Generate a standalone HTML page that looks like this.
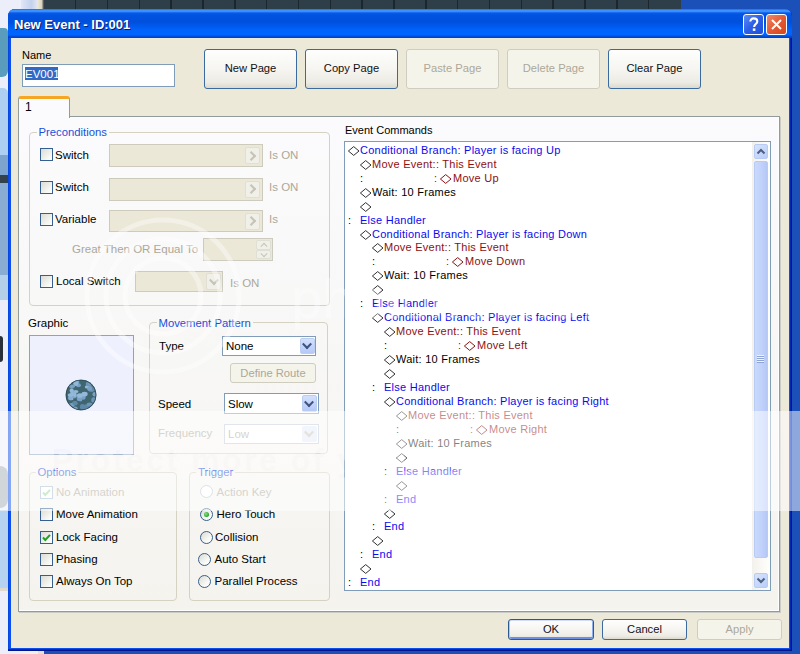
<!DOCTYPE html>
<html><head><meta charset="utf-8">
<style>
*{margin:0;padding:0;box-sizing:border-box}
html,body{width:800px;height:654px;overflow:hidden}
body{position:relative;background:#1a50b8;font-family:"Liberation Sans",sans-serif;font-size:12px;color:#000}
.a{position:absolute}
.t{position:absolute;white-space:nowrap;line-height:12px}
/* background */
#tiles{left:44px;top:0;width:637px;height:9px;background:#2e3f4a}
#win{left:8px;top:9px;width:784px;height:642px;background:#0a4ff0;border-radius:7px 7px 0 0;box-shadow:inset -1px -1px 0 #001585,inset -2px -2px 0 #0028b8,inset 1px 0 0 #0846e0}
#title{left:8px;top:9px;width:784px;height:29px;border-radius:7px 7px 0 0;
background:linear-gradient(#0b5ef2 0,#3d95ff 1px,#3a8cff 2.5px,#0a5ae8 4px,#0053e0 6px,#0050dc 13px,#005cf0 18px,#0063fc 21px,#0064ff 26px,#0050e0 27px,#003ec0 29px)}
#client{left:11px;top:38px;width:778px;height:610px;background:#ece9d8}
.btn{position:absolute;border:1px solid #3a6a9e;border-radius:3px;background:linear-gradient(#fefefd,#f6f5f1 50%,#ecebe4 85%,#dcd9cd);text-align:center;font-size:11.2px;color:#111}
.btn.dis{border-color:#cfcdbf;background:#f5f4eb;color:#aca899}
.cb{position:absolute;width:13px;height:13px;border:1px solid #355f90;background:linear-gradient(135deg,#dcdbd4,#f6f6f2 70%,#fff)}
.cb.dis{border-color:#a9bdd3;background:#fff}
.rb{position:absolute;width:13px;height:13px;border:1px solid #355f90;border-radius:50%;background:linear-gradient(135deg,#dcdbd4,#fafaf8 70%,#fff)}
.rb.dis{border-color:#b3c4d8;background:#fff}
.gb{position:absolute;border:1px solid #d5d2c2;border-radius:4px}
.gl{position:absolute;color:#1a4fdc;white-space:nowrap;line-height:12px;padding:0 2px}
.grey{color:#aca899}
.combo-d{position:absolute;border:1px solid #cdcbbd;background:#ebe8d7}
.combo{position:absolute;border:1px solid #7f9db9;background:#fff}
.dd{position:absolute;border-radius:2px;background:linear-gradient(#d3e0fd,#b5c9f7);border:1px solid #bccdf4}
.dd.dis{background:#f0efe8;border-color:#e0dfd6}
#list div{height:13.9px;line-height:13.9px;white-space:nowrap}
.b{color:#0a0af0}.r{color:#8e1010}.k{color:#000}
.ln{position:absolute;left:0;top:0;height:14px}
.s{position:absolute;top:0;white-space:nowrap;line-height:14px;font-size:11px;letter-spacing:0.25px}
.dm{position:relative;top:2px}
.dm path{fill:none;stroke:#303030;stroke-width:1}
.dr path{stroke:#8e1010}
.dd::after{content:"";position:absolute;left:50%;top:50%;width:5px;height:5px;border-right:2px solid #3d5380;border-bottom:2px solid #3d5380;transform:translate(-50%,-75%) rotate(45deg)}
.dd.dis::after{border-color:#c6c4b6}
.dd.rt::after{transform:translate(-75%,-50%) rotate(-45deg)}
.dd.up::after{transform:translate(-50%,-25%) rotate(-135deg);width:4px;height:4px;border-width:1.5px}
.dd.dn::after{width:4px;height:4px;border-width:1.5px}
</style></head><body>
<!-- background strips -->
<div class="a" style="left:0;top:0;width:21px;height:654px;background:#eceff9"></div>
<div class="a" style="left:21px;top:0;width:17px;height:9px;background:linear-gradient(90deg,#dfe6f6,#c4d2ee 60%,#e6e9ef)"></div>
<div class="a" style="left:38px;top:0;width:6px;height:9px;background:linear-gradient(90deg,#ebe7d3,#d8d4c0 60%,#3a3d3f)"></div>
<div class="a" id="tiles"></div>
<div class="a" style="left:74.8px;top:0;width:1.6px;height:9px;background:#1c272d"></div><div class="a" style="left:106.6px;top:0;width:1.6px;height:9px;background:#1c272d"></div><div class="a" style="left:138.5px;top:0;width:1.6px;height:9px;background:#1c272d"></div><div class="a" style="left:170.3px;top:0;width:1.6px;height:9px;background:#1c272d"></div><div class="a" style="left:202.2px;top:0;width:1.6px;height:9px;background:#1c272d"></div><div class="a" style="left:234.0px;top:0;width:1.6px;height:9px;background:#1c272d"></div><div class="a" style="left:265.8px;top:0;width:1.6px;height:9px;background:#1c272d"></div><div class="a" style="left:297.7px;top:0;width:1.6px;height:9px;background:#1c272d"></div><div class="a" style="left:329.5px;top:0;width:1.6px;height:9px;background:#1c272d"></div><div class="a" style="left:361.4px;top:0;width:1.6px;height:9px;background:#1c272d"></div><div class="a" style="left:393.2px;top:0;width:1.6px;height:9px;background:#1c272d"></div><div class="a" style="left:425.0px;top:0;width:1.6px;height:9px;background:#1c272d"></div><div class="a" style="left:456.9px;top:0;width:1.6px;height:9px;background:#1c272d"></div><div class="a" style="left:488.7px;top:0;width:1.6px;height:9px;background:#1c272d"></div><div class="a" style="left:520.6px;top:0;width:1.6px;height:9px;background:#1c272d"></div><div class="a" style="left:552.4px;top:0;width:1.6px;height:9px;background:#1c272d"></div><div class="a" style="left:584.2px;top:0;width:1.6px;height:9px;background:#1c272d"></div><div class="a" style="left:616.1px;top:0;width:1.6px;height:9px;background:#1c272d"></div><div class="a" style="left:647.9px;top:0;width:1.6px;height:9px;background:#1c272d"></div>
<div class="a" style="left:0;top:28px;width:8px;height:49px;background:#5a9cbc;border-radius:0 4px 6px 0"></div>
<div class="a" style="left:0;top:88px;width:8px;height:67px;background:#add0f2;border-radius:0 5px 0 0"></div>
<div class="a" style="left:0;top:155px;width:8px;height:20px;background:#7ca4cc"></div>
<div class="a" style="left:0;top:175px;width:8px;height:8px;background:#34424c"></div>
<div class="a" style="left:0;top:183px;width:8px;height:92px;background:#88acd2"></div>
<div class="a" style="left:0;top:275px;width:8px;height:25px;background:#b4cfe8"></div>
<div class="a" style="left:0;top:336px;width:3px;height:26px;background:#2a3038;border-radius:0 3px 3px 0"></div>
<div class="a" style="left:0;top:466px;width:8px;height:42px;background:#a3acb7;border-radius:0 8px 8px 0"></div>
<div class="a" style="left:0;top:510px;width:8px;height:78px;background:#b5d3f0"></div>
<div class="a" style="left:0;top:588px;width:8px;height:3px;background:#dedad0"></div>
<div class="a" style="left:21px;top:651px;width:17px;height:3px;background:#f2f0ea"></div>
<div class="a" style="left:38px;top:651px;width:6px;height:3px;background:#e6e2d0"></div>

<div class="a" id="win"></div>
<div class="a" id="title"></div>
<div class="t" style="left:14px;top:18px;color:#fff;font-weight:bold;font-size:13px;line-height:14px;text-shadow:1px 1px 0 #0a1a70">New Event - ID:001</div>
<!-- help / close -->
<div class="a" style="left:743px;top:14px;width:21px;height:21px;border:1px solid #fff;border-radius:3px;background:linear-gradient(135deg,#5c8cf6,#2c5ee6 50%,#2050d8)"></div>
<svg class="a" style="left:743px;top:14px" width="21" height="21"><path d="M7.3 7.6C7.3 5.4 8.8 4.4 10.7 4.4C12.8 4.4 14.3 5.6 14.3 7.4C14.3 9.8 11.1 10.1 11.1 12.9" stroke="#fff" stroke-width="2.1" fill="none"/><rect x="9.8" y="14.4" width="2.6" height="2.5" fill="#fff"/></svg>
<div class="a" style="left:766px;top:14px;width:21px;height:21px;border:1px solid #fff;border-radius:3px;background:linear-gradient(135deg,#ef8a6a,#e35a34 50%,#d84618)"></div>
<svg class="a" style="left:766px;top:14px" width="21" height="21"><path d="M6 6L15 15M15 6L6 15" stroke="#fff" stroke-width="2"/></svg>

<div class="a" id="client"></div>
<div class="t" style="left:22px;top:49px;font-size:11px">Name</div>
<div class="a" style="left:22px;top:64px;width:153px;height:23px;border:1px solid #7f9db9;background:#fff"></div>
<div class="a" style="left:25px;top:67px;width:33px;height:13px;background:#316ac5"></div>
<div class="t" style="left:25px;top:68px;color:#fff;font-size:11.5px">EV001</div>

<div class="btn" style="left:204px;top:49px;width:93px;height:40px;line-height:36px">New Page</div>
<div class="btn" style="left:305px;top:49px;width:93px;height:40px;line-height:36px">Copy Page</div>
<div class="btn dis" style="left:406px;top:49px;width:93px;height:40px;line-height:36px">Paste Page</div>
<div class="btn dis" style="left:507px;top:49px;width:93px;height:40px;line-height:36px">Delete Page</div>
<div class="btn" style="left:608px;top:49px;width:93px;height:40px;line-height:36px">Clear Page</div>

<!-- tab panel -->
<div class="a" style="left:18px;top:116px;width:762px;height:496px;border:1px solid #919b9c;box-shadow:inset -1px -1px 0 #fff,1px 1px 0 #c9cbc4;background:linear-gradient(#fbfbfd,#f4f3ee)"></div>
<div class="a" style="left:18px;top:96px;width:52px;height:22px;border:1px solid #919b9c;border-bottom:none;border-top:3px solid #f5a623;border-radius:3px 3px 0 0;background:#fbfbfd"></div>
<div class="t" style="left:25px;top:101px">1</div>

<!-- Preconditions -->
<div class="gb" style="left:29px;top:132px;width:301px;height:174px"></div>
<div class="gl" style="left:36.5px;top:125.5px;background:#fbfbfc;font-size:11.3px">Preconditions</div>
<div class="cb" style="left:40px;top:148px"></div>
<div class="t" style="left:55px;top:148.5px;font-size:11.5px">Switch</div>
<div class="combo-d" style="left:109px;top:144px;width:154px;height:23px"></div>
<div class="dd dis rt" style="left:245px;top:147px;width:15px;height:17px"></div>
<div class="t grey" style="left:269px;top:148.5px;font-size:11.5px">Is ON</div>
<div class="cb" style="left:40px;top:181px"></div>
<div class="t" style="left:55px;top:181px;font-size:11.5px">Switch</div>
<div class="combo-d" style="left:109px;top:177.5px;width:154px;height:23px"></div>
<div class="dd dis rt" style="left:245px;top:180.5px;width:15px;height:17px"></div>
<div class="t grey" style="left:269px;top:181px;font-size:11.5px">Is ON</div>
<div class="cb" style="left:40px;top:213px"></div>
<div class="t" style="left:55px;top:213px;font-size:11.5px">Variable</div>
<div class="combo-d" style="left:109px;top:210px;width:154px;height:22px"></div>
<div class="dd dis rt" style="left:245px;top:212.5px;width:15px;height:17px"></div>
<div class="t grey" style="left:269px;top:213px;font-size:11.5px">Is</div>
<div class="t grey" style="left:72px;top:243px;font-size:11.5px">Great Then OR Equal To</div>
<div class="combo-d" style="left:203px;top:238px;width:70px;height:23px"></div>
<div class="dd dis up" style="left:256px;top:240px;width:15px;height:10px"></div>
<div class="dd dis dn" style="left:256px;top:250px;width:15px;height:9px"></div>
<div class="cb" style="left:40px;top:275px"></div>
<div class="t" style="left:56px;top:275px;font-size:11.5px">Local Switch</div>
<div class="combo-d" style="left:135px;top:271px;width:88px;height:21px"></div>
<div class="dd dis" style="left:206px;top:273px;width:15px;height:17px"></div>
<div class="t grey" style="left:230px;top:277px;font-size:11.5px">Is ON</div>

<!-- Graphic -->
<div class="t" style="left:28px;top:316.5px;font-size:11.5px">Graphic</div>
<div class="a" style="left:29px;top:335px;width:105px;height:120px;border:1px solid #8da2c0;background:#eef1fd"></div>
<svg class="a" style="left:65px;top:379px" width="32" height="32"><defs><clipPath id="rk"><circle cx="16" cy="16" r="15.3"/></clipPath></defs><g clip-path="url(#rk)"><rect width="32" height="32" fill="#3f6670"/><ellipse cx="8.7" cy="17.2" rx="3.1" ry="2.1" fill="#7aa2c6"/><ellipse cx="18.3" cy="19.0" rx="2.2" ry="1.8" fill="#7aa2c6"/><ellipse cx="29.9" cy="15.2" rx="2.5" ry="2.3" fill="#7aa0c2"/><ellipse cx="6.2" cy="19.8" rx="2.3" ry="1.5" fill="#93b8da"/><ellipse cx="23.8" cy="6.5" rx="1.9" ry="2.5" fill="#7aa0c2"/><ellipse cx="25.1" cy="9.5" rx="2.8" ry="2.6" fill="#7aa0c2"/><ellipse cx="22.0" cy="27.8" rx="2.8" ry="2.2" fill="#5f88a8"/><ellipse cx="12.2" cy="3.0" rx="2.1" ry="2.8" fill="#7aa2c6"/><ellipse cx="14.2" cy="19.5" rx="2.4" ry="2.6" fill="#7aa2c6"/><ellipse cx="18.1" cy="17.0" rx="2.6" ry="2.7" fill="#7aa2c6"/><ellipse cx="21.1" cy="28.0" rx="3.2" ry="2.4" fill="#5f88a8"/><ellipse cx="6.6" cy="26.1" rx="3.1" ry="2.2" fill="#7aa0c2"/><ellipse cx="22.0" cy="7.9" rx="2.2" ry="1.7" fill="#93b8da"/><ellipse cx="15.5" cy="19.9" rx="1.9" ry="2.5" fill="#7aa2c6"/><ellipse cx="13.5" cy="6.2" rx="2.4" ry="2.0" fill="#7aa2c6"/><ellipse cx="5.3" cy="18.9" rx="2.3" ry="2.3" fill="#86acd0"/><ellipse cx="17.4" cy="27.8" rx="2.5" ry="2.8" fill="#5f88a8"/><ellipse cx="10.7" cy="4.2" rx="2.5" ry="2.7" fill="#93b8da"/><ellipse cx="29.2" cy="10.2" rx="2.0" ry="1.6" fill="#5f88a8"/><ellipse cx="26.3" cy="10.8" rx="3.1" ry="2.0" fill="#6c94b6"/><ellipse cx="14.9" cy="16.6" rx="3.0" ry="2.4" fill="#93b8da"/><ellipse cx="24.7" cy="9.6" rx="2.8" ry="1.8" fill="#7aa0c2"/><ellipse cx="10.4" cy="29.4" rx="2.2" ry="1.9" fill="#7aa0c2"/><ellipse cx="10.8" cy="12.5" rx="2.7" ry="1.6" fill="#93b8da"/><ellipse cx="19.6" cy="15.1" rx="3.1" ry="2.3" fill="#93b8da"/><ellipse cx="9.8" cy="15.7" rx="1.9" ry="2.4" fill="#93b8da"/><ellipse cx="29.0" cy="9.0" rx="2.2" ry="2.3" fill="#5f88a8"/><ellipse cx="7.0" cy="7.2" rx="3.0" ry="1.8" fill="#7aa2c6"/><ellipse cx="24.0" cy="4.9" rx="3.2" ry="2.4" fill="#6c94b6"/><ellipse cx="5.7" cy="16.0" rx="2.9" ry="1.8" fill="#93b8da"/><ellipse cx="7.2" cy="14.2" rx="1.9" ry="2.3" fill="#93b8da"/><ellipse cx="28.6" cy="20.9" rx="2.4" ry="2.6" fill="#6c94b6"/><ellipse cx="6.7" cy="11.4" rx="2.1" ry="2.2" fill="#93b8da"/><ellipse cx="9.6" cy="24.0" rx="2.5" ry="1.7" fill="#6c94b6"/><ellipse cx="24.6" cy="25.5" rx="3.0" ry="1.9" fill="#6c94b6"/><ellipse cx="25.2" cy="4.4" rx="2.3" ry="1.7" fill="#7aa0c2"/><ellipse cx="10.2" cy="24.2" rx="2.5" ry="2.3" fill="#5f88a8"/><circle cx="16" cy="16" r="15.3" fill="none" stroke="#2c4a54" stroke-width="1.6"/></g></svg>

<!-- Movement Pattern -->
<div class="gb" style="left:149px;top:322px;width:179px;height:132px"></div>
<div class="gl" style="left:156.5px;top:316.5px;background:#f8f8f6;font-size:11.3px">Movement Pattern</div>
<div class="t" style="left:159px;top:339.5px;font-size:11.5px">Type</div>
<div class="combo" style="left:222px;top:336px;width:94px;height:20px"></div>
<div class="dd" style="left:299.5px;top:338px;width:15px;height:16px"></div>
<div class="t" style="left:226px;top:340px;font-size:11.5px">None</div>
<div class="btn dis" style="left:230px;top:363px;width:86px;height:20px;line-height:18px">Define Route</div>
<div class="t" style="left:158px;top:397.5px;font-size:11.5px">Speed</div>
<div class="combo" style="left:224px;top:393px;width:95px;height:21px"></div>
<div class="dd" style="left:301.5px;top:395px;width:15px;height:17px"></div>
<div class="t" style="left:228px;top:398px;font-size:11.5px">Slow</div>
<div class="t grey" style="left:158px;top:427px;font-size:11.5px">Frequency</div>
<div class="combo" style="left:224px;top:423.5px;width:95px;height:20px;border-color:#c3cdd9"></div>
<div class="dd dis" style="left:301.5px;top:425.5px;width:15px;height:16px;background:#e4eaf7;border-color:#e4eaf7"></div>
<div class="t grey" style="left:228px;top:428px;font-size:11.5px">Low</div>

<!-- Options -->
<div class="gb" style="left:29px;top:471.5px;width:148px;height:129px"></div>
<div class="gl" style="left:35.5px;top:465.5px;background:#f6f5f1;font-size:11.3px">Options</div>
<div class="cb dis" style="left:40px;top:485.5px"></div>
<div class="t grey" style="left:56px;top:485.5px;font-size:11.5px">No Animation</div>
<div class="cb" style="left:40px;top:508px"></div>
<div class="t" style="left:56px;top:508px;font-size:11.5px">Move Animation</div>
<div class="cb" style="left:40px;top:530.5px"></div>
<div class="t" style="left:56px;top:530.5px;font-size:11.5px">Lock Facing</div>
<div class="cb" style="left:40px;top:553px"></div>
<div class="t" style="left:56px;top:553px;font-size:11.5px">Phasing</div>
<div class="cb" style="left:40px;top:575px"></div>
<div class="t" style="left:56px;top:575px;font-size:11.5px">Always On Top</div>
<svg class="a" style="left:40px;top:485.5px" width="13" height="13"><path d="M3 6.5L5.3 9L10 3.8" stroke="#9fd59f" stroke-width="2" fill="none"/></svg>
<svg class="a" style="left:40px;top:530.5px" width="13" height="13"><path d="M3 6.5L5.3 9L10 3.8" stroke="#21a121" stroke-width="2" fill="none"/></svg>

<!-- Trigger -->
<div class="gb" style="left:189px;top:471.5px;width:141px;height:129px"></div>
<div class="gl" style="left:196px;top:465.5px;background:#f6f5f1;font-size:11.3px">Trigger</div>
<div class="rb dis" style="left:199.5px;top:485px"></div>
<div class="t grey" style="left:216.5px;top:485.5px;font-size:11.5px">Action Key</div>
<div class="rb" style="left:199.5px;top:507.5px"></div>
<div class="a" style="left:203.7px;top:511.7px;width:5px;height:5px;border-radius:50%;background:radial-gradient(circle at 40% 40%,#8fe08f,#24a524 70%)"></div>
<div class="t" style="left:216.5px;top:508px;font-size:11.5px">Hero Touch</div>
<div class="rb" style="left:199.5px;top:530.5px"></div>
<div class="t" style="left:215px;top:530.5px;font-size:11.5px">Collision</div>
<div class="rb" style="left:198px;top:553px"></div>
<div class="t" style="left:214.5px;top:553px;font-size:11.5px">Auto Start</div>
<div class="rb" style="left:198px;top:575px"></div>
<div class="t" style="left:214.5px;top:575px;font-size:11.5px">Parallel Process</div>

<!-- Event commands -->
<div class="t" style="left:345px;top:124px;font-size:11px">Event Commands</div>
<div class="a" style="left:344px;top:141px;width:427px;height:450px;border:1px solid #7f9db9;background:#fff"></div>
<div class="a" style="left:752px;top:142px;width:17px;height:448px;background:linear-gradient(90deg,#f3f1ec,#fefefb)"></div>
<div class="a" style="left:753.5px;top:144px;width:14px;height:15px;border-radius:2px;border:1px solid #b7cbf5;background:linear-gradient(135deg,#d8e4fd,#b8cdf8)"></div>
<svg class="a" style="left:753.5px;top:144px" width="14" height="15"><path d="M3.5 9.5L7 6L10.5 9.5" stroke="#4d6185" stroke-width="2" fill="none"/></svg>
<div class="a" style="left:754px;top:161px;width:13.5px;height:397px;border-radius:2px;border:1px solid #b7cbf5;background:linear-gradient(90deg,#cad9fb,#c1d3fb 50%,#b5c8f5)"></div>
<div class="a" style="left:757px;top:355px;width:7px;height:8px;background:repeating-linear-gradient(#eef3fe 0,#eef3fe 1px,#8ea5d4 1px,#8ea5d4 2px)"></div>
<div class="a" style="left:753.5px;top:573px;width:14px;height:15px;border-radius:2px;border:1px solid #b7cbf5;background:linear-gradient(135deg,#d8e4fd,#b8cdf8)"></div>
<svg class="a" style="left:753.5px;top:573px" width="14" height="15"><path d="M3.5 5.5L7 9L10.5 5.5" stroke="#4d6185" stroke-width="2" fill="none"/></svg>
<div id="list">
<div class="ln" style="top:142.80px"><span class="s" style="left:348px"><svg class="dm" width="12" height="10"><path d="M0.4 5L5.7 0.6L11 5L5.7 9.4Z"/></svg></span><span class="s b" style="left:360px">Conditional Branch: Player is facing Up</span></div>
<div class="ln" style="top:156.75px"><span class="s" style="left:360px"><svg class="dm" width="12" height="10"><path d="M0.4 5L5.7 0.6L11 5L5.7 9.4Z"/></svg></span><span class="s r" style="left:372px">Move Event:: This Event</span></div>
<div class="ln" style="top:170.70px"><span class="s k" style="left:360px">:</span><span class="s r" style="left:434px">:</span><span class="s" style="left:440px"><svg class="dm dr" width="12" height="10"><path d="M0.4 5L5.7 0.6L11 5L5.7 9.4Z"/></svg></span><span class="s r" style="left:453px">Move Up</span></div>
<div class="ln" style="top:184.65px"><span class="s" style="left:360px"><svg class="dm" width="12" height="10"><path d="M0.4 5L5.7 0.6L11 5L5.7 9.4Z"/></svg></span><span class="s k" style="left:372px">Wait: 10 Frames</span></div>
<div class="ln" style="top:198.60px"><span class="s" style="left:360px"><svg class="dm" width="12" height="10"><path d="M0.4 5L5.7 0.6L11 5L5.7 9.4Z"/></svg></span></div>
<div class="ln" style="top:212.55px"><span class="s k" style="left:348px">:</span><span class="s b" style="left:360px">Else Handler</span></div>
<div class="ln" style="top:226.50px"><span class="s" style="left:360px"><svg class="dm" width="12" height="10"><path d="M0.4 5L5.7 0.6L11 5L5.7 9.4Z"/></svg></span><span class="s b" style="left:372px">Conditional Branch: Player is facing Down</span></div>
<div class="ln" style="top:240.45px"><span class="s" style="left:372px"><svg class="dm" width="12" height="10"><path d="M0.4 5L5.7 0.6L11 5L5.7 9.4Z"/></svg></span><span class="s r" style="left:384px">Move Event:: This Event</span></div>
<div class="ln" style="top:254.40px"><span class="s k" style="left:372px">:</span><span class="s r" style="left:446px">:</span><span class="s" style="left:452px"><svg class="dm dr" width="12" height="10"><path d="M0.4 5L5.7 0.6L11 5L5.7 9.4Z"/></svg></span><span class="s r" style="left:465px">Move Down</span></div>
<div class="ln" style="top:268.35px"><span class="s" style="left:372px"><svg class="dm" width="12" height="10"><path d="M0.4 5L5.7 0.6L11 5L5.7 9.4Z"/></svg></span><span class="s k" style="left:384px">Wait: 10 Frames</span></div>
<div class="ln" style="top:282.30px"><span class="s" style="left:372px"><svg class="dm" width="12" height="10"><path d="M0.4 5L5.7 0.6L11 5L5.7 9.4Z"/></svg></span></div>
<div class="ln" style="top:296.25px"><span class="s k" style="left:360px">:</span><span class="s b" style="left:372px">Else Handler</span></div>
<div class="ln" style="top:310.20px"><span class="s" style="left:372px"><svg class="dm" width="12" height="10"><path d="M0.4 5L5.7 0.6L11 5L5.7 9.4Z"/></svg></span><span class="s b" style="left:384px">Conditional Branch: Player is facing Left</span></div>
<div class="ln" style="top:324.15px"><span class="s" style="left:384px"><svg class="dm" width="12" height="10"><path d="M0.4 5L5.7 0.6L11 5L5.7 9.4Z"/></svg></span><span class="s r" style="left:396px">Move Event:: This Event</span></div>
<div class="ln" style="top:338.10px"><span class="s k" style="left:384px">:</span><span class="s r" style="left:458px">:</span><span class="s" style="left:464px"><svg class="dm dr" width="12" height="10"><path d="M0.4 5L5.7 0.6L11 5L5.7 9.4Z"/></svg></span><span class="s r" style="left:477px">Move Left</span></div>
<div class="ln" style="top:352.05px"><span class="s" style="left:384px"><svg class="dm" width="12" height="10"><path d="M0.4 5L5.7 0.6L11 5L5.7 9.4Z"/></svg></span><span class="s k" style="left:396px">Wait: 10 Frames</span></div>
<div class="ln" style="top:366.00px"><span class="s" style="left:384px"><svg class="dm" width="12" height="10"><path d="M0.4 5L5.7 0.6L11 5L5.7 9.4Z"/></svg></span></div>
<div class="ln" style="top:379.95px"><span class="s k" style="left:372px">:</span><span class="s b" style="left:384px">Else Handler</span></div>
<div class="ln" style="top:393.90px"><span class="s" style="left:384px"><svg class="dm" width="12" height="10"><path d="M0.4 5L5.7 0.6L11 5L5.7 9.4Z"/></svg></span><span class="s b" style="left:396px">Conditional Branch: Player is facing Right</span></div>
<div class="ln" style="top:407.85px"><span class="s" style="left:396px"><svg class="dm" width="12" height="10"><path d="M0.4 5L5.7 0.6L11 5L5.7 9.4Z"/></svg></span><span class="s r" style="left:408px">Move Event:: This Event</span></div>
<div class="ln" style="top:421.80px"><span class="s k" style="left:396px">:</span><span class="s r" style="left:470px">:</span><span class="s" style="left:476px"><svg class="dm dr" width="12" height="10"><path d="M0.4 5L5.7 0.6L11 5L5.7 9.4Z"/></svg></span><span class="s r" style="left:489px">Move Right</span></div>
<div class="ln" style="top:435.75px"><span class="s" style="left:396px"><svg class="dm" width="12" height="10"><path d="M0.4 5L5.7 0.6L11 5L5.7 9.4Z"/></svg></span><span class="s k" style="left:408px">Wait: 10 Frames</span></div>
<div class="ln" style="top:449.70px"><span class="s" style="left:396px"><svg class="dm" width="12" height="10"><path d="M0.4 5L5.7 0.6L11 5L5.7 9.4Z"/></svg></span></div>
<div class="ln" style="top:463.65px"><span class="s k" style="left:384px">:</span><span class="s b" style="left:396px">Else Handler</span></div>
<div class="ln" style="top:477.60px"><span class="s" style="left:396px"><svg class="dm" width="12" height="10"><path d="M0.4 5L5.7 0.6L11 5L5.7 9.4Z"/></svg></span></div>
<div class="ln" style="top:491.55px"><span class="s k" style="left:384px">:</span><span class="s b" style="left:396px">End</span></div>
<div class="ln" style="top:505.50px"><span class="s" style="left:384px"><svg class="dm" width="12" height="10"><path d="M0.4 5L5.7 0.6L11 5L5.7 9.4Z"/></svg></span></div>
<div class="ln" style="top:519.45px"><span class="s k" style="left:372px">:</span><span class="s b" style="left:384px">End</span></div>
<div class="ln" style="top:533.40px"><span class="s" style="left:372px"><svg class="dm" width="12" height="10"><path d="M0.4 5L5.7 0.6L11 5L5.7 9.4Z"/></svg></span></div>
<div class="ln" style="top:547.35px"><span class="s k" style="left:360px">:</span><span class="s b" style="left:372px">End</span></div>
<div class="ln" style="top:561.30px"><span class="s" style="left:360px"><svg class="dm" width="12" height="10"><path d="M0.4 5L5.7 0.6L11 5L5.7 9.4Z"/></svg></span></div>
<div class="ln" style="top:575.25px"><span class="s k" style="left:348px">:</span><span class="s b" style="left:360px">End</span></div></div>

<!-- bottom buttons -->
<div class="btn" style="left:508px;top:619px;width:86px;height:21px;line-height:19px;border-color:#2c5a8e;box-shadow:inset 0 1px 0 #cedbf9,inset 1px 0 0 #b0c6f4,inset -1px 0 0 #8eaeee,inset 0 -2px 0 #6a90e6">OK</div>
<div class="btn" style="left:602px;top:619px;width:85px;height:21px;line-height:19px">Cancel</div>
<div class="btn dis" style="left:697px;top:619px;width:85px;height:21px;line-height:19px">Apply</div>

<svg class="a" style="left:0;top:0" width="800" height="654"><g fill="none" stroke="#fff" stroke-opacity="0.4"><circle cx="163" cy="296" r="76" stroke-width="5"/><circle cx="163" cy="296" r="57" stroke-width="5"/><circle cx="163" cy="296" r="38" stroke-width="5"/></g><text x="291" y="318" font-family="Liberation Sans" font-size="56" fill="#fff" fill-opacity="0.35">photobucket</text></svg>
<svg class="a" style="left:0;top:411px" width="800" height="100"><defs><mask id="wm"><rect width="800" height="100" fill="#fff"/><text x="52" y="60" font-family="Liberation Sans" font-weight="bold" font-size="32" letter-spacing="2.5" fill="#777">Protect more of your memories for less!</text></mask></defs><rect width="800" height="100" fill="#fff" fill-opacity="0.5" mask="url(#wm)"/></svg>
</body></html>
